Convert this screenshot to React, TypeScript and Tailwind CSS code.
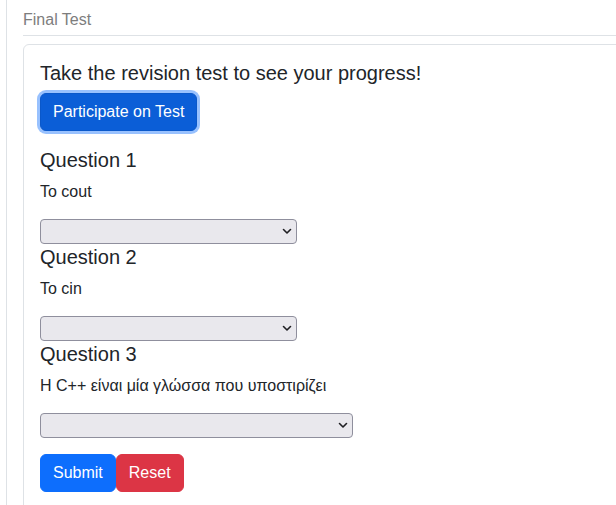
import React from "react";

function Chevron() {
  return (
    <svg width="10" height="7" viewBox="0 0 10 7" className="absolute right-[5px] top-[9px] pointer-events-none">
      <path d="M1.5 1.5 L5 5 L8.5 1.5" fill="none" stroke="#1f1f23" strokeWidth="1.6" strokeLinecap="round" strokeLinejoin="round" />
    </svg>
  );
}

function Select({ w }: { w: string }) {
  return (
    <div className={`relative h-[25px] ${w}`}>
      <select className="appearance-none w-full h-full bg-[#e9e8ed] border border-[#8f8f9d] rounded-[4px] outline-none">
        <option></option>
      </select>
      <Chevron />
    </div>
  );
}

function Question({ title, text, w }: { title: string; text: string; w: string }) {
  return (
    <div>
      <h5 className="text-[20px] leading-[24px] mb-2 text-[#212529]">{title}</h5>
      <p className="text-[16px] leading-[24px] mb-[15px] text-[#212529]">{text}</p>
      <Select w={w} />
    </div>
  );
}

export default function App() {
  return (
    <div className="h-[505px] w-[616px] overflow-hidden bg-white pl-[6px]" style={{ fontFamily: '"Liberation Sans", Arial, sans-serif' }}>
      <div className="h-full border-l border-[#dee2e6] pl-[16px] pt-[8px]">
        <div className="border-b border-[#dee2e6] pb-[3px] w-[620px]">
          <div className="text-[16px] leading-[24px] text-[#7d7d7d]">Final Test</div>
        </div>
        <div className="mt-[8px] w-[640px] border border-[#dee2e6] rounded-tl-[6px] p-4 pb-8">
          <h5 className="text-[20px] leading-[24px] mb-[8px] text-[#212529]">Take the revision test to see your progress!</h5>
          <button className="bg-[#0b5ed7] text-white text-[16px] leading-[24px] px-[12px] py-[6px] border border-[#0a58ca] rounded-[6px] shadow-[0_0_0_3px_rgba(49,132,253,0.5)] mb-[17px]">
            Participate on Test
          </button>
          <div className="flex flex-col gap-[1px]">
            <Question title="Question 1" text="To cout" w="w-[257px]" />
            <Question title="Question 2" text="To cin" w="w-[257px]" />
            <Question title="Question 3" text="Η C++ είναι μία γλώσσα που υποστιρίζει" w="w-[313px]" />
          </div>
          <div className="flex mt-[16px]">
            <button className="bg-[#0d6efd] text-white text-[16px] leading-[24px] px-[12px] py-[6px] border border-[#0d6efd] rounded-[6px]">Submit</button>
            <button className="bg-[#dc3545] text-white text-[16px] leading-[24px] px-[12px] py-[6px] border border-[#dc3545] rounded-[6px]">Reset</button>
          </div>
        </div>
      </div>
    </div>
  );
}
